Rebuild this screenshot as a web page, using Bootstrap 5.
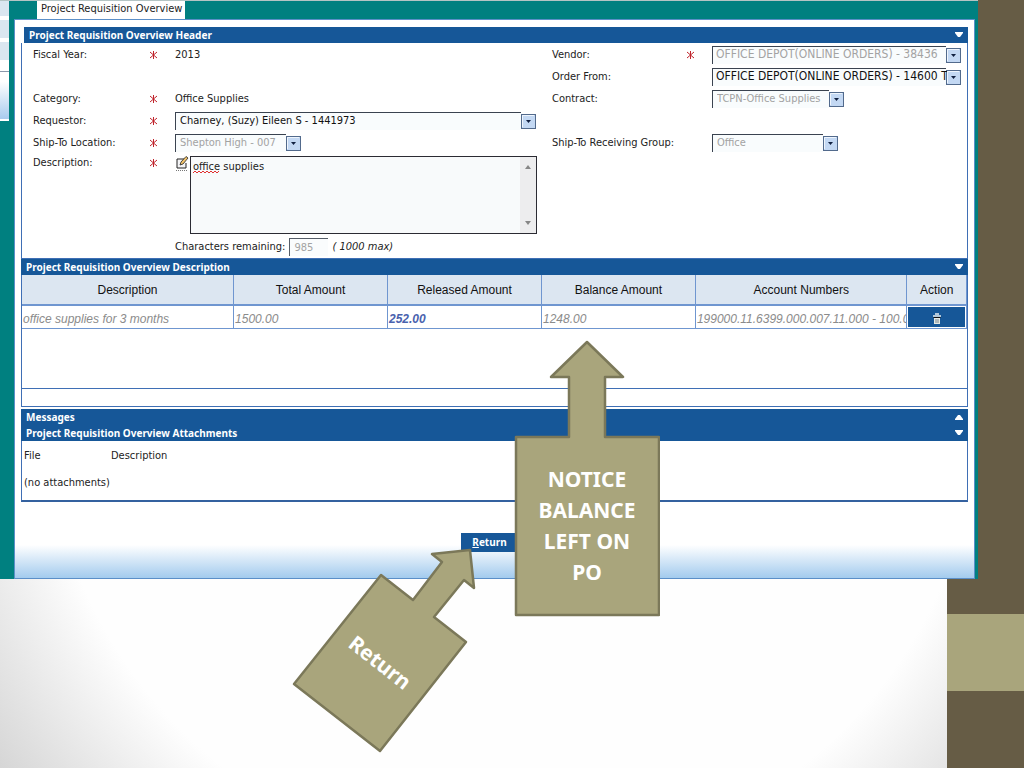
<!DOCTYPE html>
<html lang="en">
<head>
<meta charset="utf-8">
<meta name="viewport" content="width=device-width, initial-scale=1">
<title>Project Requisition Overview</title>
<link href="https://cdn.jsdelivr.net/npm/bootstrap@5.3.0/dist/css/bootstrap.min.css" rel="stylesheet">
<style>
  :root { --navy: #165798; --line: #3f6fb5; --teal: #008080; --bark: #665c45; --olive: #a9a57c; --olive-line: #7b7859; }
  body {
    font: 11px/16px "DejaVu Sans Condensed", "DejaVu Sans", sans-serif; color: #222;
    background: #fff radial-gradient(circle at 50% 52%, #fefefe 72%, #d6d6d6 97%);
  }
  .work-area { min-width: 0; }
  .side-band { width: 77px; background: var(--bark); }
  .side-top { flex: 8; }
  .side-mid { flex: 1; background: var(--olive); }
  .side-low { flex: 1; }

  /* application window, laid over the side band */
  .app-window { background: var(--teal); margin-right: -31px; padding-right: 3px; border-top: 1px solid #b4c4c4; z-index: 1; }
  .edge-pane { width: 9px; height: 120px; margin-right: 5px; background: #fff; }
  .edge-pane i { display: block; height: 18px; margin-bottom: 4px; background: #dae6f0; }
  .edge-pane i:first-child { height: 15px; }
  .edge-pane b { display: block; margin-top: 11px; height: 48px; border-top: 1px solid #8a97ab; background: linear-gradient(#fff 20%, #a8cbee); }
  .page-tab { margin-left: 23px; padding: 0 4px; height: 18px; width: 148px; background: #fff; color: #222; text-decoration: none; white-space: nowrap; }
  .page-tab:hover { color: #000; }
  .page-pane {
    border: 1px solid #5b8fc8; padding: 7px 6px 0;
    background: #fff linear-gradient(#fff, #a3cbee) bottom / 100% 33px no-repeat;
  }
  .bar { background: var(--navy); color: #fff; font: bold 10px/16px "Noto Sans", "Open Sans", sans-serif; height: 16px; padding: 0 5px; }
  .bar-first { margin-left: 3px; }
  .bar h2 { font: inherit; margin: 0; }
  .bar button { border: 0; background: none; padding: 0; line-height: 0; }
  .framed { border: 1px solid var(--line); border-top: 0; }

  .form-grid { display: grid; grid-template-columns: 142px minmax(0, 1fr) 160px 255px; grid-auto-rows: minmax(22px, auto); align-items: center; padding: 1px 0 0 11px; }
  .field-label { display: flex; justify-content: space-between; padding-right: 17px; }
  .pick {
    appearance: none; display: block; border: 0; border-radius: 0; height: 18px; padding: 0 15px 0 5px; font: inherit; color: #111; opacity: 1;
    background:
      url("data:image/svg+xml,%3Csvg xmlns='http://www.w3.org/2000/svg' viewBox='0 0 15 15'%3E%3Crect x='.5' y='.5' width='14' height='14' fill='%23c3d8f3' stroke='%23526a8c'/%3E%3Cpath d='M1.500 13V1.500H13' fill='none' stroke='%23eef5fd'/%3E%3Cpath d='M5 6h5L7.500 9z' fill='%23102040'/%3E%3C/svg%3E") right bottom 1px / 15px 15px no-repeat,
      linear-gradient(#3a4350, #3a4350) left top / calc(100% - 15px) 1px no-repeat,
      linear-gradient(#3a4350, #3a4350) left top / 1px 100% no-repeat,
      linear-gradient(#f9fcfd, #f9fcfd) left top / calc(100% - 15px) 100% no-repeat;
  }
  .pick:disabled { color: #a3a3a3; }
  .pick-wide { width: 361px; }
  .pick-mid { width: 249px; font-size: 12px; padding: 0 14px 2px 4px; }
  .pick-small { width: 132px; }
  .pick-tiny { width: 126px; }
  .note-row { align-self: start; min-height: 82px; }
  .note-label { align-self: start; padding-top: 1px; }
  .note-icon { margin-right: 1px; }
  .note-box {
    width: 347px; height: 78px; border: 1px solid #2b2b33; border-radius: 0; resize: none; overflow: hidden; padding: 2px 18px 0 2px; margin-top: 2px; color: #222;
    background:
      url("data:image/svg+xml,%3Csvg xmlns='http://www.w3.org/2000/svg' width='28' height='3'%3E%3Cpath d='M0 2l2-2 2 2 2-2 2 2 2-2 2 2 2-2 2 2 2-2 2 2 2-2 2 2 2-2' fill='none' stroke='%23e03030'/%3E%3C/svg%3E") 2px 14px no-repeat,
      url("data:image/svg+xml,%3Csvg xmlns='http://www.w3.org/2000/svg' width='16' height='6'%3E%3Cpath d='M5 5h6L8 1z' fill='%23868686'/%3E%3C/svg%3E") right 7px no-repeat,
      url("data:image/svg+xml,%3Csvg xmlns='http://www.w3.org/2000/svg' width='16' height='6'%3E%3Cpath d='M5 1h6L8 5z' fill='%23868686'/%3E%3C/svg%3E") right bottom 7px no-repeat,
      linear-gradient(#ededee, #ededee) right / 16px 100% no-repeat, #f8fafb;
  }
  .count-box { width: 39px; height: 18px; border: solid #555d68; border-width: 1px 0 0 1px; padding: 0 4px; background: #fafcfd; color: #a3a3a3; font: inherit; }

  .money { font: 12px/16px "Liberation Sans", Arial, sans-serif; table-layout: fixed; width: 100%; margin: 0; border-collapse: collapse; }
  .money th { height: 30px; background: #dce6f1; font-weight: normal; text-align: center; border: solid #6f96d0; border-width: 0 1px 2px 0; color: #111; padding: 0; }
  .money td { height: 23px; border: solid #6f96d0; border-width: 0 1px 1px 0; padding: 5px 0 0 1px; color: #8b8b8b; font-style: italic; white-space: nowrap; overflow: hidden; }
  .money td.released { color: #4a62ae; font-weight: bold; }
  .money td.action-cell { padding: 1px 1px 0; }
  .money .bin { display: block; width: 100%; height: 20px; border: 0; padding: 4px 0 0; background: var(--navy); line-height: 0; }
  .col-wide { width: 22.400%; }
  .col-mid { width: 16.300%; }
  .blank-area { height: 60px; border-bottom: 1px solid var(--line); }
  .blank-foot { height: 17px; }
  .lower { margin-top: 2px; }
  .files { width: 100%; line-height: 16px; }
  .files th, .files td { font-weight: normal; padding: 7px 0 4px 2px; }
  .files th:first-child { width: 87px; }
  .files-frame { height: 61px; border-bottom: 2px solid #34619f; }
  .go-back { width: 57px; height: 19px; margin: 31px 0 26px 440px; border: 0; padding: 0; background: var(--navy); color: #fff; font: bold 10px/19px "Noto Sans", "Open Sans", sans-serif; display: block; }

  /* callouts drawn over the window */
  .callout { color: #fff; font: bold 21px/31px "Noto Sans", "Open Sans", sans-serif; z-index: 2; }
  .callout path { fill: var(--olive); stroke: var(--olive-line); stroke-width: 2.500; stroke-linejoin: round; }
  .callout-up { left: calc(50% + 25px); top: 338px; width: 146px; height: 278px; }
  .callout-up p { top: 125px; left: 0; width: 146px; margin: 0; }
  .callout-tilt { left: calc(50% - 198px); top: 546px; width: 186px; height: 208px; }
  .callout-tilt p { left: 47px; top: 100px; width: 84px; margin: 0; transform: rotate(38deg); }
</style>
</head>
<body>
<div class="d-flex min-vh-100">
  <main class="work-area flex-grow-1 d-flex flex-column">
    <div class="app-window d-flex position-relative">
      <div class="edge-pane flex-shrink-0"><i></i><i></i><i></i><b></b></div>
      <div class="flex-grow-1">
        <nav><a class="page-tab d-block" href="#overview">Project Requisition Overview</a></nav>
        <form class="page-pane" id="overview">
          <section>
            <div class="bar bar-first d-flex justify-content-between align-items-center">
              <h2>Project Requisition Overview Header</h2>
              <button type="button" aria-label="Collapse header"><svg width="8" height="6"><path d="M0 0h8v1L5 5H3L0 1z" fill="#fff"/></svg></button>
            </div>
            <div class="framed form-grid">
              <div class="field-label"><span>Fiscal Year:</span><svg class="align-self-center" width="9" height="8"><path d="M4.500 0v8M1 1l7 6M8 1l-7 6" stroke="#c0242c" fill="none"/></svg></div>
              <div>2013</div>
              <label class="field-label" for="vendor"><span>Vendor:</span><svg class="align-self-center" width="9" height="8"><path d="M4.500 0v8M1 1l7 6M8 1l-7 6" stroke="#c0242c" fill="none"/></svg></label>
              <div><select class="pick pick-mid" id="vendor" disabled><option>OFFICE DEPOT(ONLINE ORDERS) - 38436</option></select></div>

              <div></div><div></div>
              <label for="order">Order From:</label>
              <div><select class="pick pick-mid" id="order"><option>OFFICE DEPOT(ONLINE ORDERS) - 14600 T</option></select></div>

              <div class="field-label"><span>Category:</span><svg class="align-self-center" width="9" height="8"><path d="M4.500 0v8M1 1l7 6M8 1l-7 6" stroke="#c0242c" fill="none"/></svg></div>
              <div>Office Supplies</div>
              <label for="contract">Contract:</label>
              <div><select class="pick pick-small" id="contract" disabled><option>TCPN-Office Supplies</option></select></div>

              <label class="field-label" for="requestor"><span>Requestor:</span><svg class="align-self-center" width="9" height="8"><path d="M4.500 0v8M1 1l7 6M8 1l-7 6" stroke="#c0242c" fill="none"/></svg></label>
              <div><select class="pick pick-wide" id="requestor"><option>Charney, (Suzy) Eileen S - 1441973</option></select></div>
              <div></div><div></div>

              <label class="field-label" for="shipto"><span>Ship-To Location:</span><svg class="align-self-center" width="9" height="8"><path d="M4.500 0v8M1 1l7 6M8 1l-7 6" stroke="#c0242c" fill="none"/></svg></label>
              <div><select class="pick pick-tiny" id="shipto" disabled><option>Shepton High - 007</option></select></div>
              <label for="group">Ship-To Receiving Group:</label>
              <div><select class="pick pick-tiny" id="group" disabled><option>Office</option></select></div>

              <label class="field-label note-label" for="note"><span>Description:</span><svg class="align-self-center" width="9" height="8"><path d="M4.500 0v8M1 1l7 6M8 1l-7 6" stroke="#c0242c" fill="none"/></svg></label>
              <div class="note-row d-flex align-items-start">
                <svg class="note-icon flex-shrink-0" width="14" height="18" viewBox="0 0 14 18"><path d="M9 5H2v9h9V9" fill="#f4f4f6" stroke="#222"/><path d="M1 16.500h11" stroke="#777" stroke-dasharray="1 1"/><path d="M5 11l1-3 5-5.500 2 1.500-5 6z" fill="#f2c36a" stroke="#222" stroke-width=".8"/></svg>
                <textarea class="note-box" id="note" spellcheck="false">office supplies</textarea>
              </div>
              <div></div><div></div>

              <div></div>
              <div class="d-flex align-items-center text-nowrap"><label for="left" class="me-1">Characters remaining:</label><input class="count-box" id="left" value="985" disabled><em class="ms-1">( 1000 max)</em></div>
              <div></div><div></div>
            </div>
          </section>
          <section>
            <div class="bar d-flex justify-content-between align-items-center">
              <h2>Project Requisition Overview Description</h2>
              <button type="button" aria-label="Collapse description"><svg width="8" height="6"><path d="M0 0h8v1L5 5H3L0 1z" fill="#fff"/></svg></button>
            </div>
            <div class="framed">
              <table class="money">
                <colgroup><col class="col-wide"><col class="col-mid"><col class="col-mid"><col class="col-mid"><col class="col-wide"><col></colgroup>
                <thead><tr><th>Description</th><th>Total Amount</th><th>Released Amount</th><th>Balance Amount</th><th>Account Numbers</th><th>Action</th></tr></thead>
                <tbody><tr><td>office supplies for 3 months</td><td>1500.00</td><td class="released">252.00</td><td>1248.00</td><td>199000.11.6399.000.007.11.000 - 100.0</td>
                  <td class="action-cell"><button type="button" class="bin" aria-label="Delete"><svg width="10" height="12"><path d="M3 1h4M1 3h8" stroke="#e8eef0" stroke-width="1.500"/><path d="M1.500 4.500h7" stroke="#111"/><path d="M2 5h6v6H2z" fill="#e6e9e4"/><path d="M3 7h4M3 9h4" stroke="#7b8790"/></svg></button></td></tr></tbody>
              </table>
              <div class="blank-area"></div>
              <div class="blank-foot"></div>
            </div>
          </section>
          <section class="lower">
            <div class="bar d-flex justify-content-between align-items-center">
              <h2>Messages</h2>
              <button type="button" aria-label="Expand messages"><svg width="8" height="6"><path d="M0 6h8V5L5 1H3L0 5z" fill="#fff"/></svg></button>
            </div>
            <div class="bar d-flex justify-content-between align-items-center">
              <h2>Project Requisition Overview Attachments</h2>
              <button type="button" aria-label="Collapse attachments"><svg width="8" height="6"><path d="M0 0h8v1L5 5H3L0 1z" fill="#fff"/></svg></button>
            </div>
            <div class="framed files-frame">
              <table class="files">
                <thead><tr><th>File</th><th>Description</th></tr></thead>
                <tbody><tr><td colspan="2">(no attachments)</td></tr></tbody>
              </table>
            </div>
          </section>
          <button type="button" class="go-back"><u>R</u>eturn</button>
        </form>
      </div>
      <div class="callout callout-up position-absolute">
        <svg width="146" height="278"><path d="M73 3l36 35H91v60h54v178H2V98h53V38H37z"/></svg>
        <p class="position-absolute text-center">NOTICE<br>BALANCE<br>LEFT ON<br>PO</p>
      </div>
      <div class="callout callout-tilt position-absolute">
        <svg width="186" height="208"><path d="M179 3l4 38-10-8-30 37 32 25-86 109L3 137 90 28l32 25 29-38-10-8z"/></svg>
        <p class="position-absolute text-center">Return</p>
      </div>
    </div>
  </main>
  <aside class="side-band d-flex flex-column flex-shrink-0"><div class="side-top"></div><div class="side-mid"></div><div class="side-low"></div></aside>
</div>
<script src="https://cdn.jsdelivr.net/npm/bootstrap@5.3.0/dist/js/bootstrap.bundle.min.js"></script>
</body>
</html>
